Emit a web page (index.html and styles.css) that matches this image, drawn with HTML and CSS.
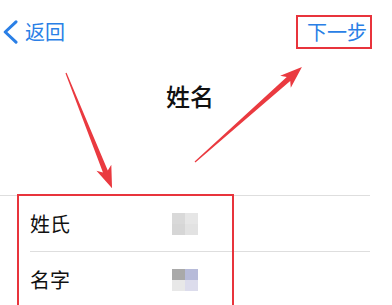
FILE: index.html
```html
<!DOCTYPE html>
<html lang="zh-CN">
<head>
<meta charset="utf-8">
<title>姓名</title>
<link rel="stylesheet" href="styles.css">
</head>
<body>
<div class="screen">
  <header class="nav">
    <div class="back">
      <svg class="chev" width="16" height="24" viewBox="0 0 16 24"><polyline points="14,1.8 3.2,12 14,22.2" fill="none" stroke="#2a7fe6" stroke-width="3" stroke-linecap="round" stroke-linejoin="round"/></svg>
      <span class="back-text">返回</span>
    </div>
    <div class="next">下一步</div>
  </header>
  <h1 class="title">姓名</h1>
  <div class="list">
    <div class="row">
      <span class="label">姓氏</span>
      <span class="blur blur-a"><i></i><i></i><i></i><i></i></span>
    </div>
    <div class="row">
      <span class="label">名字</span>
      <span class="blur blur-b"><i></i><i></i><i></i><i></i></span>
    </div>
  </div>
  <svg class="marks" width="392" height="305" viewBox="0 0 392 305">
    <rect x="18" y="195" width="215" height="130" fill="none" stroke="#e8343c" stroke-width="2"/>
    <polygon fill="#ea3a40" transform="translate(66,73) rotate(68.2)" points="0,-0.6 106,-2.6 102,-8 124,0 102,8 106,2.6 0,0.6"/>
    <polygon fill="#ea3a40" transform="translate(195,162) rotate(-41.6)" points="0,-0.6 125,-2.6 121,-8 143,0 121,8 125,2.6 0,0.6"/>
  </svg>
</div>
</body>
</html>
```
FILE: styles.css
```css
html, body {
  margin: 0;
  padding: 0;
  background: #fff;
}
.screen {
  position: relative;
  width: 392px;
  height: 305px;
  overflow: hidden;
  font-family: "Noto Sans CJK SC", "Noto Sans", sans-serif;
  color: #111;
}
.nav {
  display: flex;
  justify-content: space-between;
  align-items: center;
  height: 34px;
  margin-top: 15px;
}
.back {
  display: flex;
  align-items: center;
  padding-left: 2px;
}
.chev {
  display: block;
}
.back-text {
  margin-left: 7px;
  font-size: 20px;
  line-height: 20px;
  color: #2a7fe6;
}
.next {
  box-sizing: border-box;
  width: 76px;
  height: 34px;
  margin-right: 20px;
  border: 2px solid #e8343c;
  padding-left: 9px;
  font-size: 20px;
  line-height: 30px;
  color: #2a7fe6;
}
.title {
  margin: 35px 0 0;
  width: 380px;
  text-align: center;
  font-size: 24px;
  line-height: 24px;
  font-weight: 500;
}
.list {
  margin-top: 87px;
  width: 370px;
  border-top: 1px solid #dedede;
}
.row {
  display: flex;
  align-items: center;
  height: 55px;
  padding-left: 30px;
}
.row + .row {
  border-top: 1px solid #dedede;
  margin-left: 30px;
  padding-left: 0;
}
.label {
  width: 142px;
  font-size: 20px;
  line-height: 20px;
}
.blur {
  display: grid;
  grid-template-columns: 13px 13px;
  grid-template-rows: 11px 11px;
}
.blur-a i:nth-child(1) { background: #d9d9d9; }
.blur-a i:nth-child(2) { background: #e6e6e6; }
.blur-a i:nth-child(3) { background: #d6d6d6; }
.blur-a i:nth-child(4) { background: #e2e2e2; }
.blur-b i:nth-child(1) { background: #a9a9a9; }
.blur-b i:nth-child(2) { background: #b7bbd9; }
.blur-b i:nth-child(3) { background: #e8e8e8; }
.blur-b i:nth-child(4) { background: #dcdcec; }
.marks {
  position: absolute;
  left: 0;
  top: 0;
  pointer-events: none;
}
```
